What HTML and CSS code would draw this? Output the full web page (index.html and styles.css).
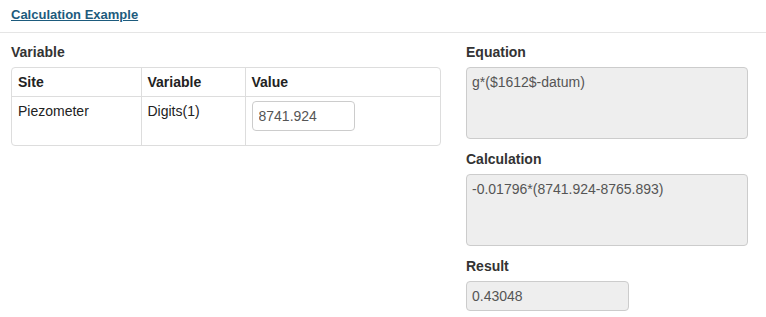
FILE: index.html
```html
<!DOCTYPE html>
<html lang="en">
<head>
  <meta charset="UTF-8">
  <meta name="viewport" content="width=device-width, initial-scale=1">
  <title>Calculation Example</title>
  <link rel="stylesheet" href="styles.css">
</head>
<body>
  <div class="head">
    <a href="#" class="title">Calculation Example</a>
  </div>

  <div class="content">
    <div class="left">
      <label class="lbl">Variable</label>
      <div class="tbl-wrap">
        <table>
          <thead>
            <tr>
              <th class="c1">Site</th>
              <th class="c2">Variable</th>
              <th>Value</th>
            </tr>
          </thead>
          <tbody>
            <tr>
              <td>Piezometer</td>
              <td>Digits(1)</td>
              <td><input type="text" class="inp" value="8741.924"></td>
            </tr>
          </tbody>
        </table>
      </div>
    </div>

    <div class="right">
      <div class="group">
        <label class="lbl">Equation</label>
        <div class="box tall">g*($1612$-datum)</div>
      </div>
      <div class="group">
        <label class="lbl">Calculation</label>
        <div class="box tall">-0.01796*(8741.924-8765.893)</div>
      </div>
      <div class="group">
        <label class="lbl">Result</label>
        <div class="box short">0.43048</div>
      </div>
    </div>
  </div>
</body>
</html>
```

FILE: styles.css
```css
* { box-sizing: border-box; margin:0; padding:0; }
body { font-family: "Liberation Sans", Arial, sans-serif; font-size:14px; line-height:20px; color:#333; background:#fff; }

.head { padding:4px 11px 7px; border-bottom:1px solid #e5e5e5; }
.title { font-size:13px; font-weight:bold; color:#1d5b7d; text-decoration:underline; }

.content { display:flex; gap:25px; padding:9px 11px; }
.left { width:430px; }
.right { width:282px; }

.lbl { display:block; font-weight:bold; color:#333; margin-bottom:5px; }

.tbl-wrap { border:1px solid #ddd; border-radius:4px; overflow:hidden; }
table { width:100%; border-collapse:collapse; }
th, td { padding:4px 6px; text-align:left; vertical-align:top; color:#222; }
th + th, td + td { border-left:1px solid #ddd; }
tbody td { border-top:1px solid #ddd; }
th { font-weight:bold; }
.c1 { width:129px; }
.c2 { width:104px; }

.inp { display:block; width:103px; height:30px; margin-bottom:10px; padding:4px 6px; border:1px solid #ccc; border-radius:4px; font-family:inherit; font-size:14px; color:#555; }

.group { margin-bottom:10px; }
.box { background:#eee; border:1px solid #ccc; border-radius:4px; color:#555; padding:4px 5px; }
.tall { height:72px; }
.short { width:163px; height:30px; }
```
